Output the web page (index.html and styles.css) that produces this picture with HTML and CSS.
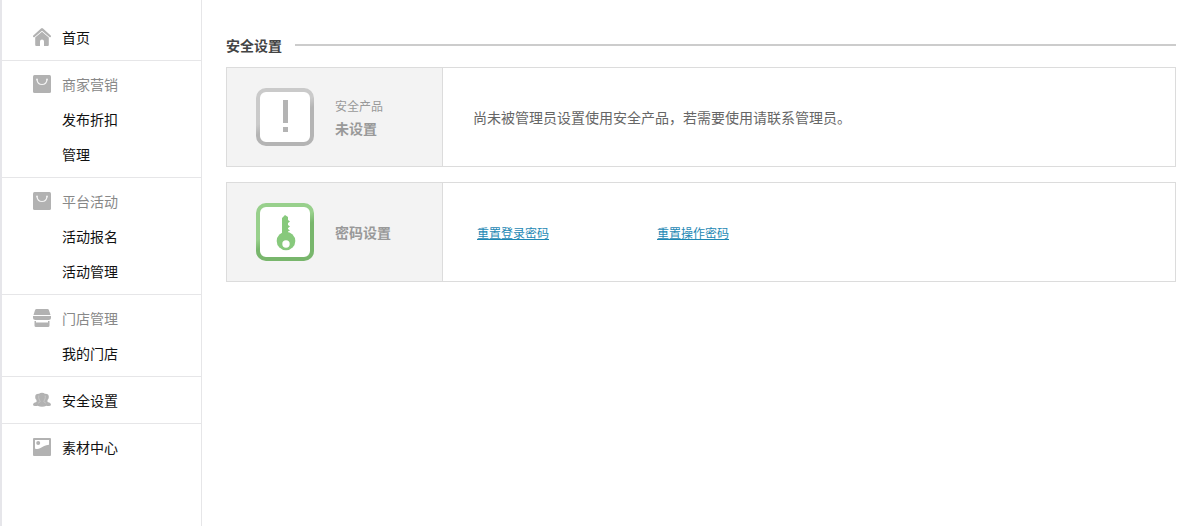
FILE: index.html
```
<!DOCTYPE html>
<html lang="zh-CN">
<head>
    <meta charset="utf-8">
    <title>安全设置</title>
    <link rel="stylesheet" href="styles.css">
</head>
<body>
    <svg class="symbols" aria-hidden="true">
        <linearGradient id="frame-grey" gradientUnits="userSpaceOnUse" x1="27" y1="24" x2="31" y2="32">
            <stop offset="0" stop-color="#cacaca"/>
            <stop offset="1" stop-color="#b4b4b4"/>
        </linearGradient>
        <linearGradient id="frame-green" gradientUnits="userSpaceOnUse" x1="27" y1="24" x2="31" y2="32">
            <stop offset="0" stop-color="#98d08c"/>
            <stop offset="1" stop-color="#78b66c"/>
        </linearGradient>
        <symbol id="icon-home" viewBox="0 0 18 18">
            <path d="M9 0a1.500 1.500 0 0 1 1 .4l7.700 7.200a.9.9 0 0 1-1.300 1.300L9 2.800 1.600 8.900A.9.9 0 0 1 .3 7.600L8 .4A1.500 1.500 0 0 1 9 0z"/>
            <path d="M9 3.800l6.800 5.600V17a1 1 0 0 1-1 1H11v-4.500a2 2 0 0 0-4 0V18H3.200a1 1 0 0 1-1-1V9.400z"/>
        </symbol>
        <symbol id="icon-bag" viewBox="0 0 18 18">
            <rect width="18" height="18" rx="1.500"/>
            <path d="M4 4.500c.3 3 2.300 5 5 5s4.700-2 5-5" fill="none" stroke="#f4f4f4" stroke-width="1.200"/>
            <circle cx="4" cy="4.500" r=".9" fill="#f4f4f4"/>
            <circle cx="14" cy="4.500" r=".9" fill="#f4f4f4"/>
        </symbol>
        <symbol id="icon-shop" viewBox="0 0 18 18">
            <path d="M3.500 0h11a1.500 1.500 0 0 1 1.400 1L17.500 6H.5L2.100 1A1.500 1.500 0 0 1 3.500 0z"/>
            <path d="M0 7h18v1.500a2.500 2.500 0 0 1-2.500 2.500h-13A2.500 2.500 0 0 1 0 8.500z"/>
            <path d="M1.500 12h1.500v1.500h12V12h1.500v4.500a1.500 1.500 0 0 1-1.500 1.500H3a1.500 1.500 0 0 1-1.500-1.500z"/>
        </symbol>
        <symbol id="icon-users" viewBox="0 0 18 18">
            <circle cx="5.500" cy="6" r="3.300"/>
            <circle cx="12.500" cy="6" r="3.300"/>
            <ellipse cx="9" cy="5.800" rx="3.800" ry="4"/>
            <path d="M0 14.200c0-2 1.200-2.700 3.500-3.200V7h11v4c2.300.5 3.500 1.200 3.500 3.200-2 1.100-3.500 1-4.500.6-3 1.200-6 1.200-9 0-1 .4-2.500.5-4.500-.6z"/>
            <path d="M5.800 4.500c-.4 3 .5 4.500 1.400 5.700-.2 1-1 1.500-2 1.900M12.200 4.500c.4 3-.5 4.500-1.400 5.700.2 1 1 1.500 2 1.900" fill="none" stroke="#d0d0d0" stroke-width=".7"/>
        </symbol>
        <symbol id="icon-picture" viewBox="0 0 18 18">
            <path fill-rule="evenodd" d="M1 0h16a1 1 0 0 1 1 1v16a1 1 0 0 1-1 1H1a1 1 0 0 1-1-1V1a1 1 0 0 1 1-1zM2 2v8.500c1.500.9 3.500.6 5.500-.5C10 8.500 12 7.200 16 6.800V2z"/>
            <circle cx="5.200" cy="5" r="2"/>
        </symbol>
    </svg>

    <div class="page">
        <nav class="sidebar">
            <div class="menu">
                <a href="#" class="menu__item"><svg class="menu__icon"><use href="#icon-home"/></svg>首页</a>
            </div>
            <div class="menu">
                <div class="menu__item menu__item--heading"><svg class="menu__icon"><use href="#icon-bag"/></svg>商家营销</div>
                <a href="#" class="menu__item">发布折扣</a>
                <a href="#" class="menu__item">管理</a>
            </div>
            <div class="menu">
                <div class="menu__item menu__item--heading"><svg class="menu__icon"><use href="#icon-bag"/></svg>平台活动</div>
                <a href="#" class="menu__item">活动报名</a>
                <a href="#" class="menu__item">活动管理</a>
            </div>
            <div class="menu">
                <div class="menu__item menu__item--heading"><svg class="menu__icon"><use href="#icon-shop"/></svg>门店管理</div>
                <a href="#" class="menu__item">我的门店</a>
            </div>
            <div class="menu">
                <a href="#" class="menu__item"><svg class="menu__icon"><use href="#icon-users"/></svg>安全设置</a>
            </div>
            <div class="menu">
                <a href="#" class="menu__item"><svg class="menu__icon"><use href="#icon-picture"/></svg>素材中心</a>
            </div>
        </nav>

        <main class="content">
            <h1 class="title">安全设置</h1>

            <section class="card">
                <div class="card__side">
                    <svg class="card__icon" viewBox="0 0 58 58">
                        <rect x="2" y="2" width="54" height="54" rx="8" fill="#fff" stroke="url(#frame-grey)" stroke-width="4"/>
                        <path d="M27 12h5v23h-5zM27 39h5v5h-5z" fill="#b4b4b4"/>
                    </svg>
                    <div>
                        <div class="card__label">安全产品</div>
                        <h2 class="card__name">未设置</h2>
                    </div>
                </div>
                <div class="card__body">尚未被管理员设置使用安全产品，若需要使用请联系管理员。</div>
            </section>

            <section class="card">
                <div class="card__side">
                    <svg class="card__icon" viewBox="0 0 58 58">
                        <rect x="2" y="2" width="54" height="54" rx="8" fill="#fff" stroke="url(#frame-green)" stroke-width="4"/>
                        <path fill="#87c97c" d="M26 32V15l3-3 3 2v3l2 1.500-2 1.500v2l2 1.500-2 1.500v1l2 1.500-2 1v5z"/>
                        <circle cx="30" cy="38" r="9.300" fill="#87c97c"/>
                        <circle cx="30" cy="41" r="3.700" fill="#fff"/>
                    </svg>
                    <h2 class="card__name">密码设置</h2>
                </div>
                <div class="card__body card__body--links">
                    <a href="#" class="card__link">重置登录密码</a>
                    <a href="#" class="card__link">重置操作密码</a>
                </div>
            </section>
        </main>
    </div>
</body>
</html>
```
FILE: styles.css
```
* {
    box-sizing: border-box;
}
body {
    margin: 0;
    background: #fff;
    color: #666;
    font-family: "Microsoft YaHei", "Noto Sans CJK SC", sans-serif;
    font-size: 14px;
}
/* Not display: none, the gradients have to stay usable */
.symbols {
    height: 0;
    position: absolute;
    width: 0;
}

.page {
    border-left: 2px solid #e6e6ea;
    display: flex;
    min-height: 100vh;
}

.sidebar {
    border-right: 1px solid #e6e6e8;
    flex: none;
    padding-top: 14px;
    width: 200px;
}
.menu {
    border-bottom: 1px solid #e6e6e8;
    padding: 5px 0 6px;
}
.menu:last-child {
    border-bottom: 0;
}
.menu__item {
    align-items: center;
    color: #111;
    display: flex;
    height: 35px;
    padding-left: 60px;
    text-decoration: none;
}
.menu__item--heading {
    color: #888;
}
.menu__icon {
    fill: #b2b2b2;
    height: 18px;
    margin-left: -29px;
    margin-right: 11px;
    width: 18px;
}

.content {
    flex: 1;
    padding: 35px 22px 24px 24px;
}
.title {
    align-items: center;
    color: #444;
    display: flex;
    font-size: 14px;
    gap: 13px;
    line-height: 20px;
    margin: 0 0 12px;
}
.title:after {
    background: #ccc;
    content: "";
    flex: 1;
    height: 2px;
}

.card {
    border: 1px solid #dcdcdc;
    display: flex;
    margin-bottom: 15px;
    min-height: 100px;
}
.card__side {
    align-items: center;
    background: #f3f3f3;
    border-right: 1px solid #dcdcdc;
    display: flex;
    flex: none;
    gap: 21px;
    padding-left: 29px;
    width: 216px;
}
.card__icon {
    height: 58px;
    width: 58px;
}
.card__label {
    color: #999;
    font-size: 12px;
    line-height: 22px;
}
.card__name {
    color: #999;
    font-size: 14px;
    line-height: 22px;
    margin: 0;
}
.card__body {
    align-items: center;
    display: flex;
    flex: 1;
    padding: 0 30px;
}
.card__body--links {
    padding-left: 34px;
}
.card__link {
    color: #1e88b4;
    font-size: 12px;
    width: 180px;
}
```
